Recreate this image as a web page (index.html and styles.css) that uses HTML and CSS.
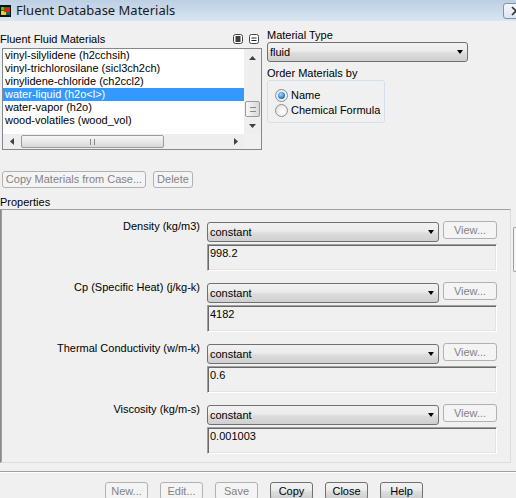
FILE: index.html
```html
<!DOCTYPE html>
<html>
<head>
<meta charset="utf-8">
<title>Fluent Database Materials</title>
<link rel="stylesheet" href="styles.css">
</head>
<body>
<div class="titlebar">
  <svg class="appicon" viewBox="0 0 11 12" width="11" height="12">
    <rect x="0" y="0" width="11" height="12" fill="#111"/>
    <rect x="1" y="2" width="9" height="8" fill="#1a7a1a"/>
    <rect x="1" y="6" width="5" height="4" fill="#e8d21a"/>
    <rect x="4" y="3" width="6" height="4" fill="#d42a1a"/>
    <rect x="1" y="2" width="3" height="3" fill="#2bd12b"/>
    <rect x="7" y="8" width="3" height="2" fill="#1a4ad4"/>
  </svg>
  <span class="title">Fluent Database Materials</span>
  <div class="closebtn">
    <svg viewBox="0 0 24 14" width="24" height="14"><path d="M8 3 L16 11 M16 3 L8 11" stroke="#333" stroke-width="1.6" fill="none"/></svg>
  </div>
</div>

<div class="top">
  <div class="left">
    <div class="listhead">
      <span>Fluent Fluid Materials</span>
      <span class="hicons">
        <svg viewBox="0 0 10 10" width="10" height="10"><rect x="0.5" y="0.5" width="9" height="9" rx="2" fill="#fff" stroke="#444"/><path d="M2.5 3H7.5M2.5 5H7.5M2.5 7H7.5" stroke="#000" stroke-width="1.4"/></svg>
        <svg viewBox="0 0 10 10" width="10" height="10"><rect x="0.5" y="0.5" width="9" height="9" rx="2" fill="#fff" stroke="#444"/><path d="M2.5 4H7.5M2.5 6.5H7.5" stroke="#222" stroke-width="1"/></svg>
      </span>
    </div>
    <div class="listbox">
      <div class="rows">
        <div class="item">vinyl-silylidene (h2cchsih)</div>
        <div class="item">vinyl-trichlorosilane (sicl3ch2ch)</div>
        <div class="item">vinylidene-chloride (ch2ccl2)</div>
        <div class="item selected">water-liquid (h2o&lt;l&gt;)</div>
        <div class="item">water-vapor (h2o)</div>
        <div class="item">wood-volatiles (wood_vol)</div>
      </div>
      <div class="vscroll">
        <div class="sbtn"><svg viewBox="0 0 7 4" width="7" height="4"><path d="M0 4L3.5 0L7 4Z" fill="#404040"/></svg></div>
        <div class="vtrack"><div class="vthumb"><span class="hgrip"></span></div></div>
        <div class="sbtn"><svg viewBox="0 0 7 4" width="7" height="4"><path d="M0 0L3.5 4L7 0Z" fill="#404040"/></svg></div>
      </div>
      <div class="hscroll">
        <div class="hbtn"><svg viewBox="0 0 4 7" width="4" height="7"><path d="M4 0L0 3.5L4 7Z" fill="#404040"/></svg></div>
        <div class="htrack"><div class="hthumb"><span class="vgrip"></span></div></div>
        <div class="hbtn"><svg viewBox="0 0 4 7" width="4" height="7"><path d="M0 0L4 3.5L0 7Z" fill="#404040"/></svg></div>
      </div>
      <div class="corner"></div>
    </div>
  </div>

  <div class="right">
    <div class="lbl">Material Type</div>
    <div class="combo wide"><span>fluid</span><span class="arrow"></span></div>
    <div class="lbl order-lbl">Order Materials by</div>
    <div class="group">
      <div class="radio-row"><span class="radio on"></span><span>Name</span></div>
      <div class="radio-row"><span class="radio"></span><span>Chemical Formula</span></div>
    </div>
  </div>
</div>

<div class="actions">
  <div class="btn disabled copy-case">Copy Materials from Case...</div>
  <div class="btn disabled delete">Delete</div>
</div>

<div class="props-lbl">Properties</div>
<div class="props-wrap">
  <div class="props">
    <div class="prow">
      <div class="plabel">Density (kg/m3)</div>
      <div class="pctl">
        <div class="pline"><div class="combo prop"><span>constant</span><span class="arrow"></span></div><div class="btn disabled view">View...</div></div>
        <div class="value">998.2</div>
      </div>
    </div>
    <div class="prow">
      <div class="plabel">Cp (Specific Heat) (j/kg-k)</div>
      <div class="pctl">
        <div class="pline"><div class="combo prop"><span>constant</span><span class="arrow"></span></div><div class="btn disabled view">View...</div></div>
        <div class="value">4182</div>
      </div>
    </div>
    <div class="prow">
      <div class="plabel">Thermal Conductivity (w/m-k)</div>
      <div class="pctl">
        <div class="pline"><div class="combo prop"><span>constant</span><span class="arrow"></span></div><div class="btn disabled view">View...</div></div>
        <div class="value">0.6</div>
      </div>
    </div>
    <div class="prow">
      <div class="plabel">Viscosity (kg/m-s)</div>
      <div class="pctl">
        <div class="pline"><div class="combo prop"><span>constant</span><span class="arrow"></span></div><div class="btn disabled view">View...</div></div>
        <div class="value">0.001003</div>
      </div>
    </div>
  </div>
  <div class="stub"></div>
</div>

<div class="separator"></div>

<div class="bottom">
  <div class="btn disabled bb">New...</div>
  <div class="btn disabled bb">Edit...</div>
  <div class="btn disabled bb">Save</div>
  <div class="btn bb">Copy</div>
  <div class="btn bb">Close</div>
  <div class="btn bb">Help</div>
</div>
</body>
</html>
```

FILE: styles.css
```css
* { box-sizing: border-box; }
html, body { margin: 0; padding: 0; }
body {
  width: 516px;
  height: 498px;
  overflow: hidden;
  background: #f0f0f0;
  font-family: "Liberation Sans", Arial, sans-serif;
  font-size: 11px;
  line-height: 13px;
  color: #000;
}

/* title bar */
.titlebar {
  height: 21px;
  display: flex;
  align-items: center;
  overflow: hidden;
  background: linear-gradient(#bccfe3, #cbdaea 50%, #d9e5f2);
}
.appicon { flex: none; margin-top: 1px; }
.title {
  flex: 1;
  margin-left: 5px;
  font-family: "Noto Sans", sans-serif;
  font-size: 13px;
  color: #1a1a1a;
  white-space: nowrap;
}
.closebtn {
  flex: none;
  width: 26px;
  height: 16px;
  margin-right: -13px;
  border: 1px solid #8091a8;
  border-radius: 3px;
  background: linear-gradient(#f5f8fb, #dbe4ee);
  display: flex;
  align-items: center;
}

/* top section */
.top { display: flex; height: 129px; }
.left { width: 262px; flex: none; }
.listhead {
  margin-top: 10px;
  height: 16px;
  display: flex;
  align-items: center;
  justify-content: space-between;
}
.hicons { display: flex; gap: 6px; margin-right: 3px; }
.hicons svg { display: block; }

.listbox {
  margin-top: 1px;
  margin-left: 2px;
  width: 260px;
  height: 102px;
  border: 1px solid #828790;
  background: #fff;
  display: grid;
  grid-template-columns: 1fr 17px;
  grid-template-rows: 85px 15px;
}
.rows { overflow: hidden; }
.item { height: 13px; padding-left: 2px; white-space: nowrap; }
.item.selected { background: #3399ff; color: #fff; }

.vscroll {
  display: flex;
  flex-direction: column;
  background: #eeeeee;
}
.sbtn { height: 17px; display: flex; align-items: center; justify-content: center; flex: none; }
.sbtn svg, .hbtn svg { display: block; }
.vtrack { flex: 1; display: flex; flex-direction: column; justify-content: flex-end; }
.vthumb {
  height: 16px;
  margin: 0 1px;
  border: 1px solid #9b9b9b;
  border-radius: 2px;
  background: linear-gradient(90deg, #f7f7f7, #e8e8e8 50%, #d8d8d8);
  display: flex;
  align-items: center;
  justify-content: center;
}
.hgrip { width: 6px; height: 5px; border-top: 1px solid #888; border-bottom: 1px solid #888; }

.hscroll {
  display: flex;
  align-items: stretch;
  background: #eeeeee;
}
.hbtn { width: 17px; display: flex; align-items: center; justify-content: center; flex: none; }
.htrack { flex: 1; display: flex; align-items: stretch; padding: 0 0 0 1px; }
.hthumb {
  width: 143px;
  margin: 1px 0;
  border: 1px solid #9b9b9b;
  border-radius: 2px;
  background: linear-gradient(#f7f7f7, #e8e8e8 50%, #d8d8d8);
  display: flex;
  align-items: center;
  justify-content: center;
}
.vgrip { width: 5px; height: 6px; border-left: 1px solid #888; border-right: 1px solid #888; }
.corner { background: #f0f0f0; }

.right { margin-left: 5px; padding-top: 8px; }
.lbl { line-height: 13px; }
.order-lbl { margin-top: 5px; }

.combo {
  display: flex;
  align-items: center;
  justify-content: space-between;
  height: 20px;
  border: 1px solid #707070;
  border-radius: 3px;
  background: linear-gradient(#f2f2f2, #ebebeb 45%, #dddddd 55%, #cfcfcf);
  padding: 0 4px 0 2px;
}
.combo.wide { width: 201px; }
.arrow {
  width: 0; height: 0;
  border-left: 3.5px solid transparent;
  border-right: 3.5px solid transparent;
  border-top: 4px solid #000;
}

.group {
  width: 118px;
  height: 43px;
  border: 1px solid #d5dfe5;
  border-radius: 3px;
  padding: 7px 0 0 7px;
}
.radio-row { height: 15px; display: flex; align-items: center; gap: 3px; }
.radio {
  width: 13px; height: 13px;
  border-radius: 50%;
  border: 1px solid #8e8f8f;
  background: radial-gradient(circle at 60% 60%, #ffffff, #dcdcdc);
  display: flex;
  align-items: center;
  justify-content: center;
}
.radio.on::after {
  content: "";
  width: 7px; height: 7px;
  border-radius: 50%;
  background: radial-gradient(circle at 40% 35%, #a8dcff, #2a80d0 60%, #1a5ea8);
}

/* buttons */
.btn {
  height: 18px;
  border: 1px solid #707070;
  border-radius: 3px;
  background: linear-gradient(#f2f2f2, #ebebeb 45%, #dddddd 55%, #cfcfcf);
  display: flex;
  align-items: center;
  justify-content: center;
  white-space: nowrap;
}
.btn.disabled {
  border-color: #adb2b5;
  background: #f4f4f4;
  color: #838383;
}

.actions { display: flex; margin-top: 21px; height: 17px; }
.actions .btn { height: 17px; }
.copy-case { margin-left: 2px; width: 144px; }
.delete { margin-left: 7px; width: 40px; }

.props-lbl { margin-top: 8px; line-height: 13px; }

.props-wrap { display: flex; align-items: flex-start; }
.props {
  width: 511px;
  height: 254px;
  border-style: solid;
  border-width: 1px;
  border-color: #a0a0a0 #dcdcdc #dcdcdc #8a8a8a;
  box-shadow: inset 1px 0 0 #a0a0a0;
  padding-top: 12px;
}
.prow { display: flex; margin-bottom: 12px; }
.plabel {
  width: 199px;
  margin-right: 7px;
  text-align: right;
  margin-top: -2px;
  white-space: nowrap;
}
.pctl { width: 290px; }
.pline { display: flex; align-items: flex-start; }
.combo.prop { width: 232px; }
.view { width: 54px; margin-left: 4px; margin-top: -1px; }
.value {
  margin-top: 2px;
  height: 27px;
  border-style: solid;
  border-width: 1px;
  border-color: #a0a0a0 #ffffff #ffffff #a0a0a0;
  box-shadow: inset 1px 1px 0 #696969, inset -1px -1px 0 #e3e3e3;
  padding: 2px 2px 0 2px;
}
.stub {
  margin-left: 2px;
  margin-top: 18px;
  width: 3px;
  height: 45px;
  border: 1px solid #a0a0a0;
  border-right: none;
  border-radius: 2px 0 0 2px;
  background: #f7f7f7;
}

.separator {
  margin-top: 8px;
  height: 2px;
  border-top: 1px solid #a0a0a0;
  border-bottom: 1px solid #ffffff;
}

.bottom {
  display: flex;
  gap: 12px;
  margin-top: 9px;
  padding-left: 105px;
}
.bb { width: 43px; }
```
